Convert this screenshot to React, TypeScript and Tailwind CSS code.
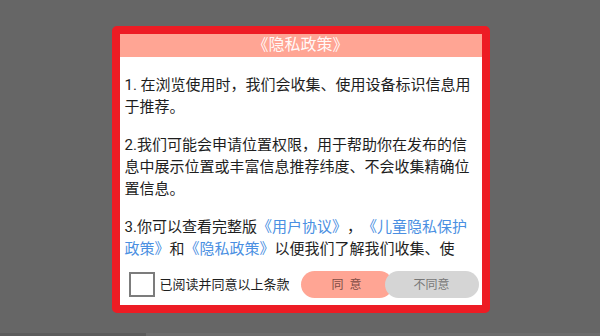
export default function App() {
  const font = { fontFamily: 'Roboto, "Noto Sans CJK SC", sans-serif' };

  return (
    <div className="relative w-[600px] h-[336px] bg-[#666666] overflow-hidden [text-spacing-trim:space-all]" style={font}>
      {/* faint content behind the overlay */}
      <div className="absolute bottom-0 left-0 right-0 h-[3px] flex">
        <div className="w-[146px] bg-[#5c5c5c]" />
        <div className="flex-1 bg-[#6c6c6c]" />
      </div>

      <div className="flex justify-center pt-[26px] pl-[1px]">
        <div className="w-[378px] h-[287px] border-[8px] border-[#ed1c24] rounded-[5px] bg-white flex flex-col overflow-hidden">
          {/* Header */}
          <div className="h-[23px] shrink-0 bg-[#ffa594] flex items-center justify-center">
            <span className="text-[16px] leading-none text-white/95 -mt-[1px]">《隐私政策》</span>
          </div>

          <div className="flex-1 overflow-hidden pt-[17px] pl-[5px] pr-[9px] text-[15px] leading-[22px] text-[#1e1e1e]">
            <p>1. 在浏览使用时，我们会收集、使用设备标识信息用于推荐。</p>
            <p className="mt-[16px]">
              2.我们可能会申请位置权限，用于帮助你在发布的信息中展示位置或丰富信息推荐纬度、不会收集精确位置信息。
            </p>
            <p className="mt-[16px]">
              3.你可以查看完整版<span className="text-[#4a8fe2]">《用户协议》</span>，<span className="text-[#4a8fe2]">《儿童隐私保护政策》</span>和<span className="text-[#4a8fe2]">《隐私政策》</span>以便我们了解我们收集、使用、存储和分享个人信息的情况。
            </p>
          </div>

          {/* Footer */}
          <div className="h-[44px] shrink-0 flex items-center pl-[9px] pr-[3px] pt-[3px]">
            <div className="w-[26px] h-[25px] border-2 border-[#7c7c7c] bg-white" />
            <span className="ml-[5px] text-[13px] text-[#1e1e1e] leading-none">已阅读并同意以上条款</span>
            <div className="ml-auto flex items-center">
              <button className="w-[92px] h-[27px] rounded-full bg-[#ffa594] text-[12px] text-[#7e4c44] leading-none">
                同&nbsp;&nbsp;意
              </button>
              <button className="relative -ml-[8px] w-[94px] h-[27px] rounded-full bg-[#d5d5d5] text-[12px] text-[#777] leading-none">
                不同意
              </button>
            </div>
          </div>
        </div>
      </div>
    </div>
  );
}
